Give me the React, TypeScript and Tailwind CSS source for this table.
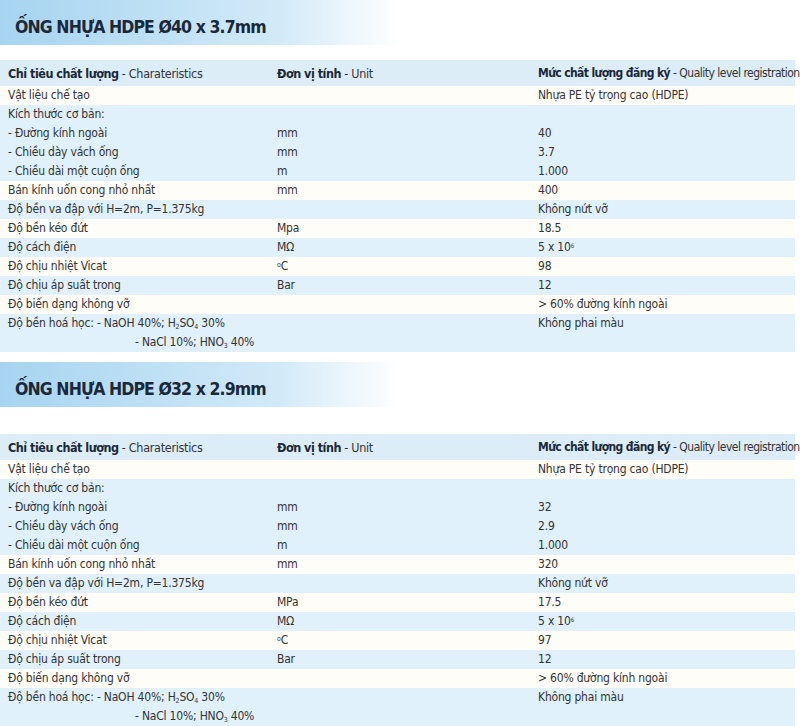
import React from "react";

type Row = { a: React.ReactNode; b?: React.ReactNode; c?: React.ReactNode; tone: "blue" | "white"; tall?: boolean };

const font = { fontFamily: '"Liberation Sans Narrow", "DejaVu Sans Condensed", "Liberation Sans", sans-serif' };

function Chem() {
  return (
    <div className="flex flex-col">
      <span>
        Độ bền hoá học: - NaOH 40%; H<sub className="text-[7px]">2</sub>SO<sub className="text-[7px]">4</sub> 30%
      </span>
      <span className="pl-[127px]">
        - NaCl 10%; HNO<sub className="text-[7px]">3</sub> 40%
      </span>
    </div>
  );
}

function rows(d: string, t: string, r: string, k: string, tmp: string): Row[] {
  return [
    { a: "Vật liệu chế tạo", c: "Nhựa PE tỷ trọng cao (HDPE)", tone: "white" },
    { a: "Kích thước cơ bản:", tone: "blue" },
    { a: "- Đường kính ngoài", b: "mm", c: d, tone: "blue" },
    { a: "- Chiều dày vách ống", b: "mm", c: t, tone: "blue" },
    { a: "- Chiều dài một cuộn ống", b: "m", c: "1.000", tone: "blue" },
    { a: "Bán kính uốn cong nhỏ nhất", b: "mm", c: r, tone: "white" },
    { a: "Độ bền va đập với H=2m, P=1.375kg", c: "Không nứt vỡ", tone: "blue" },
    { a: "Độ bền kéo đứt", b: k === "18.5" ? "Mpa" : "MPa", c: k, tone: "white" },
    {
      a: "Độ cách điện",
      b: "MΩ",
      c: (
        <span>
          5 x 10<sup className="text-[6px]">6</sup>
        </span>
      ),
      tone: "blue",
    },
    {
      a: "Độ chịu nhiệt Vicat",
      b: (
        <span>
          <sup className="text-[7px]">o</sup>C
        </span>
      ),
      c: tmp,
      tone: "white",
    },
    { a: "Độ chịu áp suất trong", b: "Bar", c: "12", tone: "blue" },
    { a: "Độ biến dạng không vỡ", c: "> 60% đường kính ngoài", tone: "white" },
    { a: <Chem />, c: "Không phai màu", tone: "blue", tall: true },
  ];
}

function Section({ title, data, gap }: { title: string; data: Row[]; gap: string }) {
  return (
    <section>
      <div className="h-[45px] flex items-center pl-[15px] bg-gradient-to-r from-[#a6d4f0] via-[#d2eaf8] via-35% to-white to-50%">
        <h2 className="text-[17.5px] font-bold text-[#1b2838] tracking-[-0.9px] pt-[10px]">{title}</h2>
      </div>
      <div className={gap} />
      <div className="mr-[5px] text-[12px] tracking-[-0.2px] text-[#333] leading-[19px]">
        <div className="grid grid-cols-[269px_261px_1fr] h-[26px] items-center pl-[8px] bg-[#dcedf8] text-[12.5px] tracking-[-0.3px]">
          <div>
            <span className="font-bold text-[#1b2838] tracking-[-0.5px]">Chỉ tiêu chất lượng</span> - Charateristics
          </div>
          <div>
            <span className="font-bold text-[#1b2838] tracking-[-0.5px]">Đơn vị tính</span> - Unit
          </div>
          <div className="whitespace-nowrap text-[12px] tracking-[-0.5px]">
            <span className="font-bold text-[#1b2838] tracking-[-0.6px]">Mức chất lượng đăng ký</span> - Quality level registration
          </div>
        </div>
        {data.map((r, i) => (
          <div
            key={i}
            className={`grid grid-cols-[269px_261px_1fr] pl-[8px] items-start ${r.tall ? "h-[38px]" : "h-[19px]"} ${
              r.tone === "blue" ? "bg-[#e0f1fb]" : "bg-[#fffdf8]"
            }`}
          >
            <div>{r.a}</div>
            <div>{r.b}</div>
            <div>{r.c}</div>
          </div>
        ))}
      </div>
    </section>
  );
}

export default function App() {
  return (
    <div className="w-[800px] h-[726px] overflow-hidden bg-white" style={font}>
      <Section title="ỐNG NHỰA HDPE Ø40 x 3.7mm" data={rows("40", "3.7", "400", "18.5", "98")} gap="h-[15px]" />
      <div className="h-[10px]" />
      <Section title="ỐNG NHỰA HDPE Ø32 x 2.9mm" data={rows("32", "2.9", "320", "17.5", "97")} gap="h-[27px]" />
    </div>
  );
}
